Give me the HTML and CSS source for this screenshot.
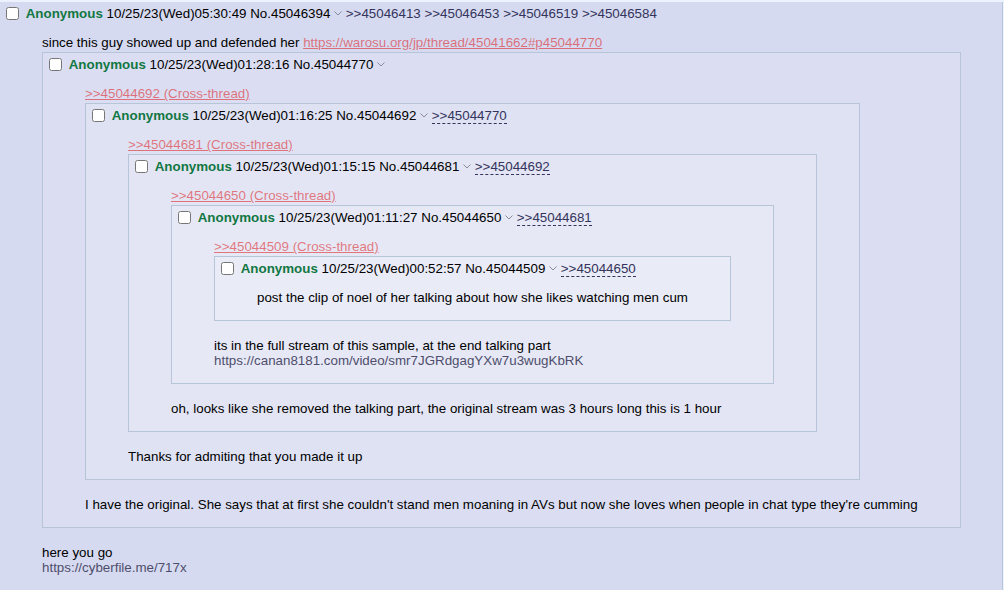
FILE: index.html
```html
<!DOCTYPE html>
<html lang="en">
<head>
    <meta charset="UTF-8">
    <title>/jp/ - Thread</title>
    <link rel="stylesheet" href="styles.css">
</head>
<body>
    <div class="post reply">
        <div class="info">
            <input type="checkbox"> <span class="name">Anonymous</span> <span class="date">10/25/23(Wed)05:30:49</span> <span class="num">No.45046394</span> <a class="menu"><svg width="8" height="5" viewBox="0 0 8 5"><polyline points="0.5,0.5 4,4 7.5,0.5" /></svg></a> <a class="backlink">&gt;&gt;45046413</a> <a class="backlink">&gt;&gt;45046453</a> <a class="backlink">&gt;&gt;45046519</a> <a class="backlink">&gt;&gt;45046584</a>
        </div>
        <blockquote>since this guy showed up and defended her <a class="xlink">https://warosu.org/jp/thread/45041662#p45044770</a>
            <div class="inline">
                <div class="post">
                    <div class="info">
                        <input type="checkbox"> <span class="name">Anonymous</span> <span class="date">10/25/23(Wed)01:28:16</span> <span class="num">No.45044770</span> <a class="menu"><svg width="8" height="5" viewBox="0 0 8 5"><polyline points="0.5,0.5 4,4 7.5,0.5" /></svg></a>
                    </div>
                    <blockquote><a class="xlink">&gt;&gt;45044692 (Cross-thread)</a>
                        <div class="inline">
                            <div class="post">
                                <div class="info">
                                    <input type="checkbox"> <span class="name">Anonymous</span> <span class="date">10/25/23(Wed)01:16:25</span> <span class="num">No.45044692</span> <a class="menu"><svg width="8" height="5" viewBox="0 0 8 5"><polyline points="0.5,0.5 4,4 7.5,0.5" /></svg></a> <a class="backlink fwd">&gt;&gt;45044770</a>
                                </div>
                                <blockquote><a class="xlink">&gt;&gt;45044681 (Cross-thread)</a>
                                    <div class="inline">
                                        <div class="post">
                                            <div class="info">
                                                <input type="checkbox"> <span class="name">Anonymous</span> <span class="date">10/25/23(Wed)01:15:15</span> <span class="num">No.45044681</span> <a class="menu"><svg width="8" height="5" viewBox="0 0 8 5"><polyline points="0.5,0.5 4,4 7.5,0.5" /></svg></a> <a class="backlink fwd">&gt;&gt;45044692</a>
                                            </div>
                                            <blockquote><a class="xlink">&gt;&gt;45044650 (Cross-thread)</a>
                                                <div class="inline">
                                                    <div class="post">
                                                        <div class="info">
                                                            <input type="checkbox"> <span class="name">Anonymous</span> <span class="date">10/25/23(Wed)01:11:27</span> <span class="num">No.45044650</span> <a class="menu"><svg width="8" height="5" viewBox="0 0 8 5"><polyline points="0.5,0.5 4,4 7.5,0.5" /></svg></a> <a class="backlink fwd">&gt;&gt;45044681</a>
                                                        </div>
                                                        <blockquote><a class="xlink">&gt;&gt;45044509 (Cross-thread)</a>
                                                            <div class="inline">
                                                                <div class="post">
                                                                    <div class="info">
                                                                        <input type="checkbox"> <span class="name">Anonymous</span> <span class="date">10/25/23(Wed)00:52:57</span> <span class="num">No.45044509</span> <a class="menu"><svg width="8" height="5" viewBox="0 0 8 5"><polyline points="0.5,0.5 4,4 7.5,0.5" /></svg></a> <a class="backlink fwd">&gt;&gt;45044650</a>
                                                                    </div>
                                                                    <blockquote>post the clip of noel of her talking about how she likes watching men cum</blockquote>
                                                                </div>
                                                            </div>
                                                            <br>its in the full stream of this sample, at the end talking part<br><span class="url">https://canan8181.com/video/smr7JGRdgagYXw7u3wugKbRK</span>
                                                        </blockquote>
                                                    </div>
                                                </div>
                                                <br>oh, looks like she removed the talking part, the original stream was 3 hours long this is 1 hour
                                            </blockquote>
                                        </div>
                                    </div>
                                    <br>Thanks for admiting that you made it up
                                </blockquote>
                            </div>
                        </div>
                        <br>I have the original. She says that at first she couldn't stand men moaning in AVs but now she loves when people in chat type they're cumming
                    </blockquote>
                </div>
            </div>
            <br>here you go<br><span class="url">https://cyberfile.me/717x</span>
        </blockquote>
    </div>
</body>
</html>
```

FILE: styles.css
```css
body {
    margin: 0;
    background: #eef2ff;
    color: #000;
    font-family: "Liberation Sans", Arial, sans-serif;
    font-size: 13.35px;
    line-height: 15px;
}
.reply {
    margin: 2px 1px 0 0;
    background: #d6daf0;
    border: 1px solid #b7c5d9;
    border-top: none;
    border-left: none;
}
.post {
    padding: 2px;
}
.info {
    height: 18px;
    line-height: 19px;
    white-space: nowrap;
}
.info input {
    width: 13px;
    height: 13px;
    margin: 0 3px 0 4px;
    vertical-align: -2px;
}
.name {
    color: #117743;
    font-weight: bold;
}
.menu svg {
    fill: none;
    stroke: #8a8a9a;
    stroke-width: 1;
    vertical-align: 2px;
}
.backlink {
    color: #34345c;
}
.backlink.fwd {
    border-bottom: 1px dashed #34345c;
}
blockquote {
    margin: 13px 40px;
    white-space: nowrap;
}
.xlink {
    color: rgba(221, 0, 0, 0.5);
    text-decoration: underline;
}
.url {
    color: #4e4e6c;
}
.inline {
    display: table;
    margin: 2px 0;
    border: 1px solid #b7c5d9;
    background: rgba(255, 255, 255, 0.13);
}
```
